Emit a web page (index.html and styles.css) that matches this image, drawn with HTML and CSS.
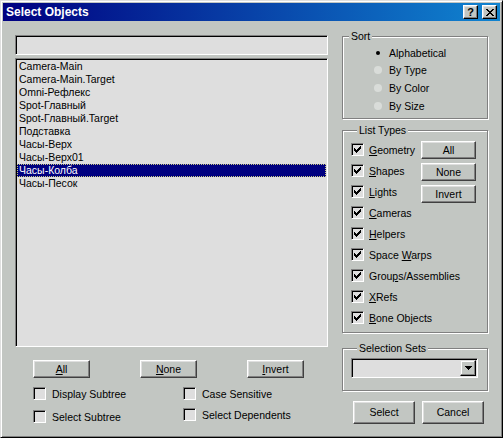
FILE: index.html
```html
<!DOCTYPE html>
<html>
<head>
<meta charset="utf-8">
<title>Select Objects</title>
<link rel="stylesheet" href="styles.css">
</head>
<body>
<div class="window">
  <div class="titlebar">
    <span class="title">Select Objects</span>
    <span class="cap-btns">
      <span class="cap-btn help">?</span>
      <span class="cap-btn close"><svg width="8" height="7" viewBox="0 0 8 7" shape-rendering="crispEdges"><path d="M0 0h2v1H0zM6 0h2v1H6zM1 1h2v1H1zM5 1h2v1H5zM2 2h4v1H2zM3 3h2v1H3zM2 4h4v1H2zM1 5h2v1H1zM5 5h2v1H5zM0 6h2v1H0zM6 6h2v1H6z" fill="#000"/></svg></span>
    </span>
  </div>
  <div class="client">
    <div class="left">
      <div class="search sunken"></div>
      <div class="list sunken">
        <div class="item">Camera-Main</div>
        <div class="item">Camera-Main.Target</div>
        <div class="item">Omni-Рефлекс</div>
        <div class="item">Spot-Главный</div>
        <div class="item">Spot-Главный.Target</div>
        <div class="item">Подставка</div>
        <div class="item">Часы-Верх</div>
        <div class="item">Часы-Верх01</div>
        <div class="item sel">Часы-Колба</div>
        <div class="item">Часы-Песок</div>
      </div>
      <div class="btn-row">
        <button class="btn"><span><u>A</u>ll</span></button>
        <button class="btn"><span><u>N</u>one</span></button>
        <button class="btn"><span><u>I</u>nvert</span></button>
      </div>
      <div class="opts">
        <div class="opt"><span class="check"></span><span>Display Subtree</span></div>
        <div class="opt"><span class="check"></span><span>Case Sensitive</span></div>
        <div class="opt"><span class="check"></span><span>Select Subtree</span></div>
        <div class="opt dep"><span class="check"></span><span>Select Dependents</span></div>
      </div>
    </div>
    <div class="right">
      <fieldset class="group sort">
        <legend>Sort</legend>
        <div class="radio-row"><span class="radio on"></span><span>Alphabetical</span></div>
        <div class="radio-row"><span class="radio"></span><span>By Type</span></div>
        <div class="radio-row"><span class="radio"></span><span>By Color</span></div>
        <div class="radio-row"><span class="radio"></span><span>By Size</span></div>
      </fieldset>
      <fieldset class="group types">
        <legend>List Types</legend>
        <div class="types-grid">
          <div class="checks">
            <div class="crow"><span class="check"><svg class="tick" width="7" height="7" viewBox="0 0 7 7" shape-rendering="crispEdges"><path d="M0 2h1v3H0zM1 3h1v3H1zM2 4h1v3H2zM3 3h1v3H3zM4 2h1v3H4zM5 1h1v3H5zM6 0h1v3H6z"/></svg></span><span><u>G</u>eometry</span></div>
            <div class="crow"><span class="check"><svg class="tick" width="7" height="7" viewBox="0 0 7 7" shape-rendering="crispEdges"><path d="M0 2h1v3H0zM1 3h1v3H1zM2 4h1v3H2zM3 3h1v3H3zM4 2h1v3H4zM5 1h1v3H5zM6 0h1v3H6z"/></svg></span><span><u>S</u>hapes</span></div>
            <div class="crow"><span class="check"><svg class="tick" width="7" height="7" viewBox="0 0 7 7" shape-rendering="crispEdges"><path d="M0 2h1v3H0zM1 3h1v3H1zM2 4h1v3H2zM3 3h1v3H3zM4 2h1v3H4zM5 1h1v3H5zM6 0h1v3H6z"/></svg></span><span><u>L</u>ights</span></div>
            <div class="crow"><span class="check"><svg class="tick" width="7" height="7" viewBox="0 0 7 7" shape-rendering="crispEdges"><path d="M0 2h1v3H0zM1 3h1v3H1zM2 4h1v3H2zM3 3h1v3H3zM4 2h1v3H4zM5 1h1v3H5zM6 0h1v3H6z"/></svg></span><span><u>C</u>ameras</span></div>
            <div class="crow"><span class="check"><svg class="tick" width="7" height="7" viewBox="0 0 7 7" shape-rendering="crispEdges"><path d="M0 2h1v3H0zM1 3h1v3H1zM2 4h1v3H2zM3 3h1v3H3zM4 2h1v3H4zM5 1h1v3H5zM6 0h1v3H6z"/></svg></span><span><u>H</u>elpers</span></div>
            <div class="crow"><span class="check"><svg class="tick" width="7" height="7" viewBox="0 0 7 7" shape-rendering="crispEdges"><path d="M0 2h1v3H0zM1 3h1v3H1zM2 4h1v3H2zM3 3h1v3H3zM4 2h1v3H4zM5 1h1v3H5zM6 0h1v3H6z"/></svg></span><span>Space <u>W</u>arps</span></div>
            <div class="crow"><span class="check"><svg class="tick" width="7" height="7" viewBox="0 0 7 7" shape-rendering="crispEdges"><path d="M0 2h1v3H0zM1 3h1v3H1zM2 4h1v3H2zM3 3h1v3H3zM4 2h1v3H4zM5 1h1v3H5zM6 0h1v3H6z"/></svg></span><span>Grou<u>p</u>s/Assemblies</span></div>
            <div class="crow"><span class="check"><svg class="tick" width="7" height="7" viewBox="0 0 7 7" shape-rendering="crispEdges"><path d="M0 2h1v3H0zM1 3h1v3H1zM2 4h1v3H2zM3 3h1v3H3zM4 2h1v3H4zM5 1h1v3H5zM6 0h1v3H6z"/></svg></span><span><u>X</u>Refs</span></div>
            <div class="crow"><span class="check"><svg class="tick" width="7" height="7" viewBox="0 0 7 7" shape-rendering="crispEdges"><path d="M0 2h1v3H0zM1 3h1v3H1zM2 4h1v3H2zM3 3h1v3H3zM4 2h1v3H4zM5 1h1v3H5zM6 0h1v3H6z"/></svg></span><span><u>B</u>one Objects</span></div>
          </div>
          <div class="type-btns">
            <button class="btn">All</button>
            <button class="btn">None</button>
            <button class="btn">Invert</button>
          </div>
        </div>
      </fieldset>
      <fieldset class="group sets">
        <legend>Selection Sets</legend>
        <div class="combo sunken">
          <span class="combo-arrow"><svg width="7" height="4" viewBox="0 0 7 4" shape-rendering="crispEdges"><path d="M0 0h7v1H0zM1 1h5v1H1zM2 2h3v1H2zM3 3h1v1H3z" fill="#000"/></svg></span>
        </div>
      </fieldset>
      <div class="dlg-btns">
        <button class="btn big">Select</button>
        <button class="btn big">Cancel</button>
      </div>
    </div>
  </div>
</div>
</body>
</html>
```

FILE: styles.css
```css
:root {
  --bg: #c2c6c2;
  --field: #dedede;
}

html, body {
  margin: 0;
  background: var(--bg);
}

body {
  font-family: "Liberation Sans", Arial, sans-serif;
  font-size: 10.5px;
  color: #000;
}

u {
  text-decoration: underline;
  text-underline-offset: 1px;
}

.window {
  box-sizing: border-box;
  width: 503px;
  height: 438px;
  border: 1px solid;
  border-color: #dfdfdf #000 #000 #dfdfdf;
  box-shadow: inset 1px 1px 0 #fff, inset -1px -1px 0 #808080;
  padding: 2px;
  display: flex;
  flex-direction: column;
}

.titlebar {
  height: 18px;
  flex: none;
  background: linear-gradient(to right, #000080, #1084d0);
  display: flex;
  align-items: center;
  justify-content: space-between;
  padding: 0 3px;
}

.title {
  color: #fff;
  font-weight: bold;
  font-size: 12px;
}

.cap-btns {
  display: flex;
  gap: 4px;
}

.cap-btn {
  box-sizing: border-box;
  width: 15px;
  height: 14px;
  background: var(--bg);
  border: 1px solid;
  border-color: #fff #000 #000 #fff;
  box-shadow: inset -1px -1px 0 #808080, inset 1px 1px 0 #dfdfdf;
  display: flex;
  align-items: center;
  justify-content: center;
  font-weight: bold;
  font-size: 11px;
  line-height: 1;
}

.client {
  flex: 1;
  display: flex;
  gap: 14px;
  padding-left: 12px;
}

.left {
  width: 313px;
  padding-top: 14px;
}

.right {
  width: 146px;
}

.sunken {
  box-sizing: border-box;
  background: var(--field);
  border: 1px solid;
  border-color: #808080 #fff #fff #808080;
  box-shadow: inset 1px 1px 0 #000, inset -1px -1px 0 #dfdfdf;
}

.search {
  height: 20px;
}

.list {
  height: 289px;
  margin-top: 3px;
  padding: 1px;
}

.item {
  height: 13px;
  line-height: 13px;
  padding-left: 2px;
  white-space: nowrap;
}

.item.sel {
  background: #000080;
  color: #fff;
  outline: 1px dotted #c8c880;
  outline-offset: -1px;
}

.btn {
  box-sizing: border-box;
  font: inherit;
  color: #000;
  background: var(--bg);
  border: 1px solid;
  border-color: #fff #404040 #404040 #fff;
  box-shadow: inset -1px -1px 0 #808080, inset 1px 1px 0 #dfdfdf;
  padding: 0;
  margin: 0;
  display: flex;
  align-items: center;
  justify-content: center;
}

.btn-row {
  display: flex;
  gap: 50px;
  padding-left: 18px;
  margin-top: 13px;
}

.btn-row .btn {
  width: 57px;
  height: 18px;
}

.opts {
  display: grid;
  grid-template-columns: 150px auto;
  row-gap: 10px;
  margin-top: 9px;
  padding-left: 18px;
}

.opt {
  display: flex;
  align-items: center;
  height: 13px;
}

.opt.dep {
  margin-top: -2px;
}

.check {
  box-sizing: border-box;
  flex: none;
  width: 13px;
  height: 13px;
  background: var(--field);
  border: 1px solid;
  border-color: #808080 #fff #fff #808080;
  box-shadow: inset 1px 1px 0 #000, inset -1px -1px 0 #dfdfdf;
  display: flex;
  align-items: center;
  justify-content: center;
  margin-right: 6px;
}

.tick {
  fill: #000;
}

.group {
  margin: 0;
  padding: 0;
  min-width: 0;
  border: 1px solid #808080;
  box-shadow: 1px 1px 0 #fff, inset 1px 1px 0 #fff;
}

.group legend {
  margin-left: 6px;
  padding: 0 2px;
  height: 13px;
  line-height: 13px;
  background: var(--bg);
}

.sort {
  margin-top: 9px;
  padding: 1px 0 3.6px 0;
}

.radio-row {
  height: 17.6px;
  display: flex;
  align-items: center;
  padding-left: 31px;
}

.radio {
  flex: none;
  width: 8px;
  height: 8px;
  border-radius: 50%;
  background: #d9dcd9;
  margin-right: 7px;
  display: flex;
  align-items: center;
  justify-content: center;
}

.radio.on {
  background: transparent;
}

.radio.on::after {
  content: "";
  width: 4px;
  height: 4px;
  border-radius: 50%;
  background: #000;
}

.types {
  margin-top: 5px;
  padding: 2.5px 0 3.5px 8px;
}

.types-grid {
  display: grid;
}

.types-grid > * {
  grid-area: 1 / 1;
}

.checks {
  display: flex;
  flex-direction: column;
}

.crow {
  height: 21px;
  display: flex;
  align-items: center;
  white-space: nowrap;
}

.crow .check {
  margin-right: 5px;
}

.type-btns {
  justify-self: end;
  align-self: start;
  margin-top: 1.5px;
  margin-right: 11px;
  display: flex;
  flex-direction: column;
  gap: 4px;
}

.type-btns .btn {
  width: 55px;
  height: 18px;
}

.sets {
  margin-top: 9px;
  padding: 3px 0 12px 8px;
}

.combo {
  width: 127px;
  height: 20px;
  padding: 1px;
  display: flex;
  justify-content: flex-end;
}

.combo-arrow {
  box-sizing: border-box;
  width: 16px;
  height: 16px;
  background: var(--bg);
  border: 1px solid;
  border-color: #dfdfdf #000 #000 #dfdfdf;
  box-shadow: inset -1px -1px 0 #808080, inset 1px 1px 0 #fff;
  display: flex;
  align-items: center;
  justify-content: center;
}

.dlg-btns {
  display: flex;
  gap: 7px;
  padding-left: 11px;
  margin-top: 10px;
}

.dlg-btns .btn {
  width: 62px;
  height: 23px;
}
```
